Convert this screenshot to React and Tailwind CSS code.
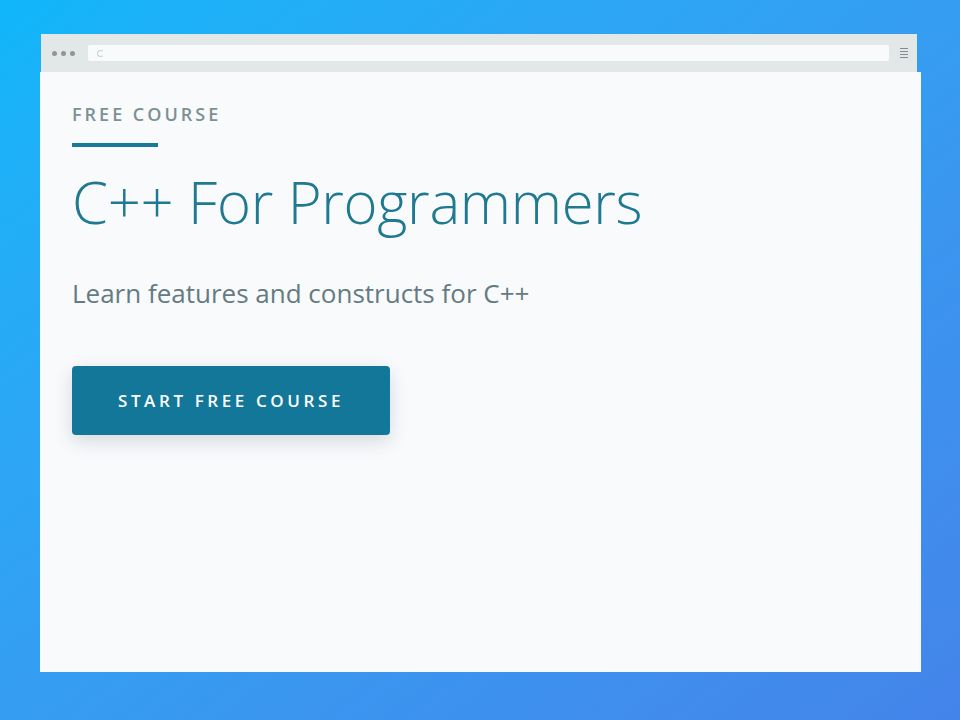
import React from 'react';

const font = { fontFamily: '"Open Sans", "Liberation Sans", sans-serif' };

const App = () => {
  return (
    <div
      className="w-[960px] h-[720px] bg-linear-to-br from-[#0fb6fa] to-[#4484ea] pt-[34px] pl-[40px]"
      style={font}
    >
      {/* Browser window */}
      <div className="w-[881px] flex flex-col">
        {/* Toolbar */}
        <div className="ml-[1px] w-[876px] h-[38px] bg-[#e2e8e8] flex items-center pl-[11px]">
          <div className="flex items-center gap-[4px] shrink-0">
            <span className="w-[5px] h-[5px] rounded-full bg-[#8a9899]" />
            <span className="w-[5px] h-[5px] rounded-full bg-[#8a9899]" />
            <span className="w-[5px] h-[5px] rounded-full bg-[#8a9899]" />
          </div>
          <div className="ml-[13px] w-[801px] shrink-0 h-[16px] bg-[#f8fafc] rounded-[2px] flex items-center pl-[9px]">
            <span className="w-[7px] h-[7px] rounded-full border border-[#c8d0d2] border-r-transparent" />
          </div>
          <div className="ml-[11px] flex flex-col gap-[2px] shrink-0">
            <span className="w-[8px] h-[1px] bg-[#7f8e90]" />
            <span className="w-[8px] h-[1px] bg-[#7f8e90]" />
            <span className="w-[8px] h-[1px] bg-[#7f8e90]" />
            <span className="w-[8px] h-[1px] bg-[#7f8e90]" />
          </div>
        </div>

        {/* Page */}
        <div className="w-[881px] h-[600px] bg-[#f8fafc] pl-[32px] pt-[30px]">
          <p className="text-[18px] font-semibold tracking-[3px] text-[#7d9093] leading-[24px]">
            FREE COURSE
          </p>
          <div className="mt-[17px] w-[86px] h-[4px] bg-[#1a7898]" />
          <h1 className="mt-[15px] text-[58px] font-light text-[#1f7991] leading-[80px] tracking-[-0.3px]">
            C++ For Programmers
          </h1>
          <p className="mt-[35px] text-[26px] text-[#657b82] leading-[32px]">
            Learn features and constructs for C++
          </p>
          <button className="mt-[57px] w-[318px] h-[69px] bg-[#13779a] rounded-[4px] text-white text-[17px] font-semibold tracking-[3.6px] shadow-[0_6px_18px_rgba(60,80,90,0.18)]">
            START FREE COURSE
          </button>
        </div>
      </div>
    </div>
  );
};

export default App;
